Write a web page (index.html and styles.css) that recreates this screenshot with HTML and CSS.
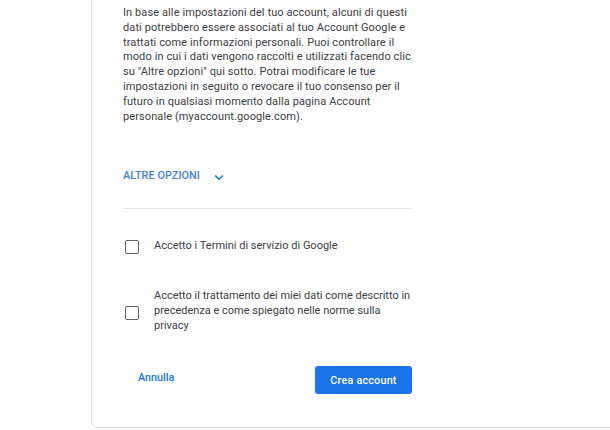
FILE: index.html
```html
<!DOCTYPE html>
<html>
<head>
  <meta charset="UTF-8" />
  <title>Crea il tuo Account Google</title>
  <link rel="stylesheet" href="styles.css">
</head>
<body>

  <div class="card">
    <div class="content">
      <p class="info">In base alle impostazioni del tuo account, alcuni di questi dati potrebbero essere associati al tuo Account Google e trattati come informazioni personali. Puoi controllare il modo in cui i dati vengono raccolti e utilizzati facendo clic su "Altre opzioni" qui sotto. Potrai modificare le tue impostazioni in seguito o revocare il tuo consenso per il futuro in qualsiasi momento dalla pagina Account personale (myaccount.google.com).</p>

      <div class="more-options">
        <span>ALTRE OPZIONI</span>
        <svg class="chevron" width="10" height="7" viewBox="0 0 10 7">
          <polyline points="1.2,1.5 5,5.2 8.8,1.5" fill="none" stroke="#1a73e8" stroke-width="1.6" />
        </svg>
      </div>

      <div class="divider"></div>

      <label class="check-row first">
        <span class="check"></span>
        <span class="check-label">Accetto i Termini di servizio di Google</span>
      </label>

      <label class="check-row second">
        <span class="check"></span>
        <span class="check-label">Accetto il trattamento dei miei dati come descritto in precedenza e come spiegato nelle norme sulla privacy</span>
      </label>

      <div class="actions">
        <button class="btn-text">Annulla</button>
        <button class="btn-primary">Crea account</button>
      </div>
    </div>
  </div>

</body>
</html>
```

FILE: styles.css
```css
html, body {
  margin: 0;
  background-color: #fff;
  color: #3c4043;
  font-family: Roboto, "Liberation Sans", sans-serif;
  font-size: 11px;
  line-height: 14.8px;
  overflow: hidden;
  height: 100%;
}

.card {
  margin: -20px 0 0 91px;
  width: 560px;
  border: 1px solid #dadce0;
  border-radius: 7px;
  padding: 25px 0 33px 31px;
  box-sizing: border-box;
}

.content {
  width: 289px;
}

.info {
  margin: 0;
  letter-spacing: 0.1px;
}

.more-options {
  display: flex;
  align-items: center;
  gap: 14px;
  margin-top: 45px;
  color: #3f7fdc;
  font-weight: 500;
  font-size: 10.8px;
  letter-spacing: 0.1px;
}

.chevron {
  margin-top: 2px;
}

.divider {
  height: 1px;
  background-color: #e4e5e8;
  margin-top: 24px;
}

.check-row {
  display: flex;
  align-items: center;
  gap: 15px;
  padding-left: 2px;
}

.check-row.first {
  margin-top: 30px;
}

.check-row.second {
  margin-top: 35px;
}

.check-row.second .check {
  margin-top: 4px;
}

.check {
  flex: none;
  width: 12px;
  height: 12px;
  border: 1.5px solid #5f6368;
  border-radius: 2px;
}

.check-label {
  flex: none;
  width: 260px;
  color: #3c4043;
}

.actions {
  display: flex;
  align-items: center;
  justify-content: space-between;
  margin-top: 33px;
}

.btn-text {
  font-family: inherit;
  font-size: 10.8px;
  font-weight: 500;
  color: #1a73e8;
  background: transparent;
  border: none;
  padding: 0 0 0 15px;
  margin-bottom: 5px;
  cursor: pointer;
}

.btn-primary {
  font-family: inherit;
  font-size: 10.8px;
  font-weight: 500;
  letter-spacing: 0.2px;
  color: #fff;
  background-color: #1a73e8;
  border: none;
  border-radius: 3px;
  height: 28px;
  width: 97px;
  cursor: pointer;
}
```
